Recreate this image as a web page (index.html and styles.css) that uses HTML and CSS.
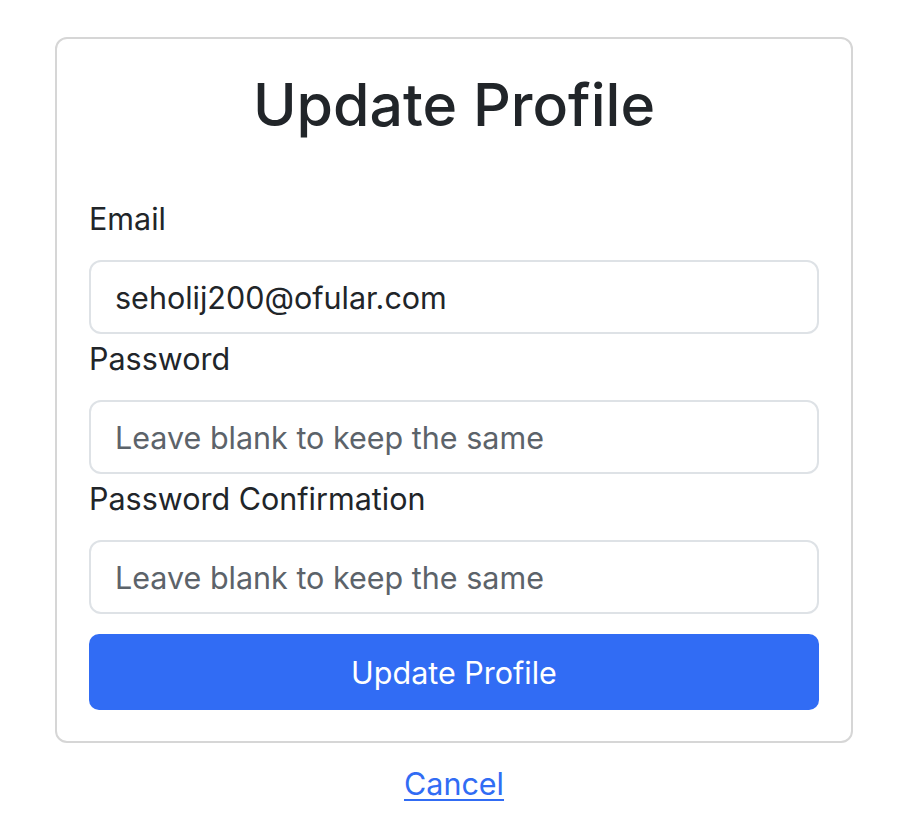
FILE: index.html
```html
<!DOCTYPE html>
<html>
<head>
<meta charset="utf-8">
<link rel="stylesheet" href="styles.css">
</head>
<body>
<div class="page">
  <div class="card">
    <h1 class="title">Update Profile</h1>
    <form class="form">
      <div class="field">
        <label class="label" for="email">Email</label>
        <input class="input" id="email" type="email" value="seholij200@ofular.com">
      </div>
      <div class="field">
        <label class="label" for="pw">Password</label>
        <input class="input" id="pw" type="password" placeholder="Leave blank to keep the same">
      </div>
      <div class="field">
        <label class="label" for="pwc">Password Confirmation</label>
        <input class="input" id="pwc" type="password" placeholder="Leave blank to keep the same">
      </div>
      <button class="btn" type="button">Update Profile</button>
    </form>
  </div>
  <div class="footer">
    <a class="link" href="#">Cancel</a>
  </div>
</div>
</body>
</html>
```
FILE: styles.css
```css
* { box-sizing: border-box; }
html, body { margin: 0; padding: 0; background: #fff; }
body {
  font-family: Inter, "Noto Sans", "Liberation Sans", sans-serif;
  color: #212529;
}
.page {
  padding: 37px 0 0 55px;
}
.card {
  width: 798px;
  border: 2px solid #d6d6d6;
  border-radius: 12px;
  padding: 30px 32px 31px;
}
.title {
  margin: 0 0 56px;
  height: 71px;
  text-align: center;
  font-size: 59px;
  font-weight: 500;
  line-height: 71px;
}
.form { display: flex; flex-direction: column; gap: 2px; }
.field { display: flex; flex-direction: column; }
.label {
  font-size: 30.5px;
  line-height: 46px;
  height: 46px;
  margin-bottom: 18px;
}
.input {
  height: 74px;
  border: 2px solid #dee2e6;
  border-radius: 12px;
  padding: 0 24px;
  font-family: inherit;
  font-size: 30.5px;
  color: #212529;
  outline: none;
}
.input::placeholder { color: #5c636a; opacity: 1; }
.btn {
  margin-top: 18px;
  height: 76px;
  border: none;
  border-radius: 10px;
  background: #316cf4;
  color: #fff;
  font-family: inherit;
  font-size: 30.5px;
  cursor: pointer;
}
.footer {
  width: 798px;
  text-align: center;
  padding-top: 18px;
  font-size: 30.5px;
  line-height: 46px;
}
.link {
  color: #316cf4;
  text-decoration: underline;
  text-underline-offset: 4px;
  text-decoration-thickness: 2px;
}
```
